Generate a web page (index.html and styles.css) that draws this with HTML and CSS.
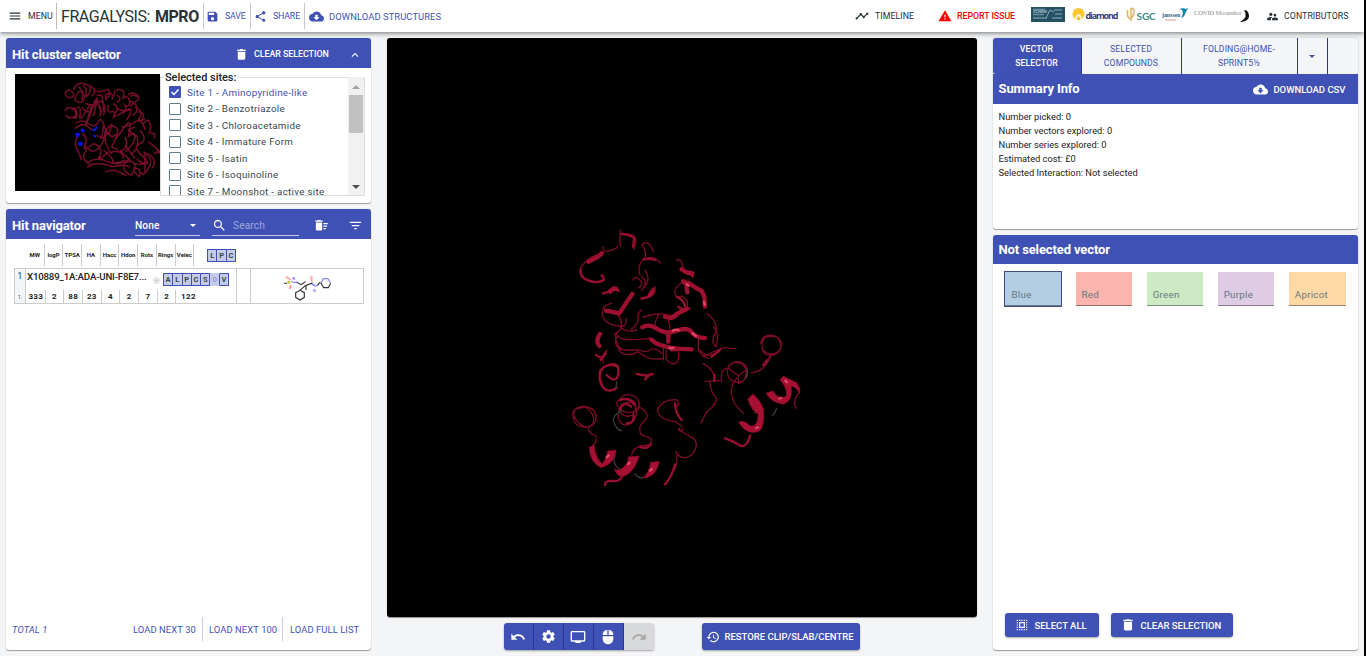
FILE: index.html
```html
<!DOCTYPE html>
<html lang="en">
<head>
<meta charset="utf-8">
<title>Fragalysis</title>
<link rel="stylesheet" href="styles.css">
</head>
<body>
<svg width="0" height="0" class="defs">
  <symbol id="trash" viewBox="0 0 24 24"><path d="M5 7h14v12c0 1.500-1 2.500-2.500 2.500h-9C6 21.500 5 20.500 5 19zM4 3h4.500l1-1h5l1 1H20v2.500H4z"/></symbol>
  <symbol id="cloud" viewBox="0 0 24 24"><path d="M19.350 10.040A7.490 7.490 0 0 0 12 4C9.110 4 6.600 5.640 5.350 8.040A5.994 5.994 0 0 0 0 14c0 3.310 2.690 6 6 6h13c2.760 0 5-2.240 5-5 0-2.640-2.050-4.780-4.650-4.960zM17 13l-5 5-5-5h3V9h4v4h3z"/></symbol>
</svg>
<header class="topbar">
  <div class="item menu"><svg viewBox="0 0 24 24" width="14" height="14"><path d="M3 18h18v-2H3v2zm0-5h18v-2H3v2zm0-7v2h18V6H3z"/></svg><span>MENU</span></div>
  <div class="item brand"><span>FRAGALYSIS:</span><b>MPRO</b></div>
  <div class="item save"><svg viewBox="0 0 24 24" width="13" height="13"><path d="M17 3H5a2 2 0 0 0-2 2v14a2 2 0 0 0 2 2h14c1.100 0 2-.9 2-2V7l-4-4zm-5 16a3 3 0 1 1 0-6 3 3 0 0 1 0 6zm3-10H5V5h10v4z"/></svg><span>SAVE</span></div>
  <div class="item share"><svg viewBox="0 0 24 24" width="13" height="13"><path d="M18 16.080c-.76 0-1.440.3-1.960.77L8.910 12.700a3.300 3.300 0 0 0 0-1.400l7.050-4.110A3 3 0 1 0 15 5c0 .24.040.47.090.7L8.040 9.810a3 3 0 1 0 0 4.380l7.120 4.160c-.05.21-.08.43-.08.650a2.920 2.920 0 1 0 2.920-2.920z"/></svg><span>SHARE</span></div>
  <div class="item dl"><svg width="15" height="15"><use href="#cloud"/></svg><span>DOWNLOAD STRUCTURES</span></div>
  <div class="item timeline"><svg viewBox="0 0 24 24" width="14" height="14"><path d="M23 8a2 2 0 0 1-2.510 1.930l-3.560 3.550A2 2 0 1 1 13.070 13.480l-2.550-2.550c-.32.090-.72.090-1.040 0l-4.550 4.560A2 2 0 1 1 3.510 14.070l4.560-4.550a2 2 0 1 1 3.860 0l2.550 2.550c.32-.09.720-.09 1.040 0l3.550-3.560A2 2 0 1 1 23 8z"/></svg><span>TIMELINE</span></div>
  <div class="item issue"><svg viewBox="0 0 24 24" width="14" height="14"><path d="M1 21h22L12 2 1 21zm12-3h-2v-2h2v2zm0-4h-2v-4h2v4z"/></svg><span>REPORT ISSUE</span></div>
  <div class="logos">
    <svg width="222" height="18" viewBox="0 0 222 18">
      <rect x="1" y="1" width="34" height="15" fill="#235063"/><path d="M3 3.500h12M3 8.500h11M3 12h14M24 4h8M25 8h7M22 12h10" stroke="#6b92a0" stroke-width="1.500"/><path d="M16 12l4-8 4 2" stroke="#8fb0bb" fill="none"/>
      <text x="3" y="7" class="lg-xs" fill="#d4e2e6">XCHEM</text>
      <circle cx="48.500" cy="8" r="6" fill="#fcc72c"/><path d="M45 14c0-8 7-8 7 0z" fill="#fff6d0"/><path d="M47 14c0-5 3-5 3 0z" fill="#f7bd2b"/>
      <text x="55.500" y="13" class="lg-d" fill="#343e75">diamond</text>
      <path d="M97.500 4v4q0 4 3 5M101 2v13M101 2q4 1 3 5t-3 5" stroke="#e3b466" stroke-width="1.500" fill="none"/>
      <text x="106.500" y="13.500" class="lg-s" fill="#3c8c83">SGC</text>
      <text x="132" y="11" class="lg-j" fill="#38658f">janssen</text><path d="M135 14h11" stroke="#e89396"/><path d="M149 3q8-2 7 2-1 6-5 7 3-5 1-8zM154 4l4-2-2 4z" fill="#1681ad"/>
      <text x="164" y="8.500" class="lg-c" fill="#888">COVID Moonshot</text><path d="M214 4q5 7-4 12 12-1 8-10-1-2-4-2z" fill="#111"/>
    </svg>
  </div>
  <div class="item contrib"><svg viewBox="0 0 24 24" width="13" height="13"><path d="M16.500 12a2.500 2.500 0 1 0 0-5 2.500 2.500 0 0 0 0 5zM9 11a3 3 0 1 0 0-6 3 3 0 0 0 0 6zm7.500 3c-1.830 0-5.500.92-5.500 2.750V19h11v-2.250c0-1.830-3.670-2.750-5.500-2.750zM9 13c-2.330 0-7 1.170-7 3.500V19h7v-2.250c0-.85.330-2.340 2.370-3.470A13 13 0 0 0 9 13z"/></svg><span>CONTRIBUTORS</span></div>
</header>

<main class="layout">
  <section class="left">
    <div class="card cluster">
      <div class="card-head"><h2 class="t-cluster">Hit cluster selector</h2>
        <div class="head-btn"><svg width="13" height="13"><use href="#trash"/></svg><span>CLEAR SELECTION</span></div>
        <svg class="chev" viewBox="0 0 24 24" width="14" height="14"><path d="M12 8l-6 6 1.410 1.410L12 10.830l4.590 4.580L18 14z"/></svg>
      </div>
      <div class="cluster-body">
        <svg class="thumb" width="145" height="117" viewBox="15 12 435 350">
          <g class="mini">
            <path d="M165 70q5-15 18-8t5 18q-16 8-23-10M190 60q10-25 30-20t30 15q10 15-5 22M195 82q15-30 25-10t-10 25q-20-5-15-15M205 50q20 10 10 40M220 45q15 15 5 35M238 50q8 15-10 30M250 60q20 10 30 0M260 75q25-5 15 20M280 65q15-15 18 0t-10 18M290 90q-10-15 5-20t12 18M312 80q0-25 18-22t8 30M320 75q20 10 0 22M338 85q15-12 20 5t-12 20M355 75q10-12 25-2t0 20q-20 8-25-8M362 78q15-8 20 5"/>
            <path d="M165 122q8-15 22-8t8 25q-20 10-28-5M185 120q10-15 15 5t-10 20M200 110q15 0 10 25t20-15 5 20 10-20 5 18M215 110q20 30 35 0t25 20M225 100q25 10 45-8M265 110q10 5 5 30M280 100q10 15 0 35M295 105q-5 25 10 20t5 20M310 100q20 10 5 30t25-5 10 25M340 100q15 10 0 30M360 110q15-20 20 0t-15 25M375 110q25 10 15 30t15 5M385 125q25 5 10 20M250 95h30v30M320 115q30 15 45 0"/>
            <path d="M195 160q20-15 40 0t30-5 20 20 20-15M195 175q25-25 50 5M205 195q-15 20-5 40t15 35M215 190q20 10 10 35t25-5M230 240q-20 20 0 35t0 15M225 225q20 30 40 10t20-50q15-25 30-15M250 220q30 10 20 35t25-10M280 160q0 40-10 45M300 165q-25 25-10 60t15 20M310 170q20 0 10 25t20-20 15 25M335 170q20 0 40-15t30 25M345 200q15 30-15 45M355 200q20-20 20 0t-30 45M380 195q10 40-15 55M390 180q25 30 0 40t10 40-30 20M400 160q15-20 20 0t-5 30M420 190q20-5 12 15M415 215q20 15 35 30l-20 5M440 240l10 10"/>
            <path d="M235 275q25-15 60 0t65-10M240 285q30-10 70 5M265 260q40 30 80 10M280 240q30 20 30 40M330 240l35 35M345 225l30 40M305 245q35-5 35 20M310 290q30-10 50 0M285 305q30-12 50 5l15 5M340 290q5-20 25-15t0 40q-20-5-25-25M370 300q20 30 20 10t-20-15M400 245q35 20 15 50t-20 10M405 245v60M415 250q30 20 10 45M380 265q15 20 35 10M285 180l20 20 20-10M260 195l20 10 15-20M320 200l-15 30 20 10M375 170l-20 10 25 20"/>
          </g>
          <g fill="#1111ef"><circle cx="218" cy="181" r="6"/><circle cx="203" cy="194" r="7"/><circle cx="211" cy="221" r="7"/></g>
          <path d="M246 177l8 4 8-12M250 195l8 6" fill="none" stroke="#1515d0" stroke-width="6"/>
        </svg>
        <fieldset class="sites"><legend>Selected sites:</legend>
          <div class="site-list">
            <label class="on"><i><svg viewBox="0 0 12 12" width="12" height="12"><path d="M2.500 6l2.500 2.500L9.500 3.500" fill="none" stroke="#fff" stroke-width="1.500"/></svg></i><span>Site 1 - Aminopyridine-like</span></label>
            <label><i></i><span>Site 2 - Benzotriazole</span></label>
            <label><i></i><span>Site 3 - Chloroacetamide</span></label>
            <label><i></i><span>Site 4 - Immature Form</span></label>
            <label><i></i><span>Site 5 - Isatin</span></label>
            <label><i></i><span>Site 6 - Isoquinoline</span></label>
            <label><i></i><span>Site 7 - Moonshot - active site</span></label>
          </div>
          <div class="bar"><b class="up"></b><b class="grip"></b><b class="down"></b></div>
        </fieldset>
      </div>
    </div>

    <div class="card navigator">
      <div class="card-head"><h2>Hit navigator</h2>
        <div class="select"><span>None</span><b></b></div>
        <div class="search"><svg viewBox="0 0 24 24" width="15" height="15"><path d="M15.500 14h-.79l-.28-.27A6.500 6.500 0 1 0 13.730 14.430l.27.280v.79l5 4.990L20.490 19l-4.990-5zm-6 0a4.500 4.500 0 1 1 0-9 4.500 4.500 0 0 1 0 9z"/></svg><span>Search</span></div>
        <svg class="sweep" viewBox="0 0 24 24" width="15" height="15"><path d="M15 16h4v2h-4zM15 8h7v2h-7zM15 12h6v2h-6zM3 18c0 1.100.9 2 2 2h6c1.100 0 2-.9 2-2V7H3v11zM14 4h-3l-1-1H6L5 4H2v2h12z"/></svg>
        <svg class="filter" viewBox="0 0 24 24" width="15" height="15"><path d="M10 18h4v-2h-4v2zM3 6v2h18V6H3zm3 7h12v-2H6v2z"/></svg>
      </div>
      <div class="cols"><span>MW</span><span>logP</span><span>TPSA</span><span>HA</span><span>Hacc</span><span>Hdon</span><span>Rots</span><span>Rings</span><span>Velec</span><div class="tags"><b>L</b><b>P</b><b>C</b></div></div>
      <div class="hit">
        <div class="idx"><span>1</span><small>1.</small></div>
        <div class="info">
          <div class="name"><span>X10889_1A:ADA-UNI-F8E7...</span><svg width="7" height="7" viewBox="0 0 7 7"><circle cx="3.500" cy="3.500" r="2.800" fill="none" stroke="#ccc"/><circle cx="3.500" cy="3.500" r="1.200" fill="#bbb"/></svg><div class="tags"><b>A</b><b>L</b><b>P</b><b>C</b><b>S</b><b class="dim">D</b><b>V</b></div></div>
          <div class="vals"><span>333</span><span>2</span><span>88</span><span>23</span><span>4</span><span>2</span><span>7</span><span>2</span><span>122</span></div>
        </div>
        <div class="gap"></div>
        <div class="mol"><svg width="112" height="34" viewBox="756 190 336 102" stroke-width="3.500">
          <g class="bonds">
          <path d="M892 229l14 8 13-9M919 240l-16 14M903 254l13 7v14l-13 8-13-8v-14zM919 240l18-7 8 6M955 240l7-10M962 232h4l8 14h14l7-13M921 241v12" stroke="#333"/>
          <path d="M877 227l8 4 10-2M884 215v6M939 233l8 8 8-2M966 232l7-13h14l8 14" stroke="#8589ff"/>
          <path d="M868 217l7 5M875 238v8M938 219l1 13" stroke="#ff8580"/><path d="M855 233h9" stroke="#555"/><path d="M865 232l9-5" stroke="#ddc444" stroke-width="8"/>
          </g>
          <g class="atoms"><text x="860" y="220" fill="#ff8580">O</text><text x="869" y="251" fill="#ff8580">O</text><text x="933" y="220" fill="#ff8580">O</text><text x="880" y="224" fill="#8589ff">N</text><text x="942" y="258" fill="#8589ff">N</text></g>
        </svg></div>
      </div>
      <div class="list-foot"><em>TOTAL 1</em><span class="n30">LOAD NEXT 30</span><span class="n100">LOAD NEXT 100</span><span class="full">LOAD FULL LIST</span></div>
    </div>
  </section>

  <section class="centre">
    <div class="viewer">
      <svg width="590" height="579" viewBox="0 0 590 579">
        <g transform="translate(173,182) scale(.33333)" class="strand">
          <g class="thin"><path d="M182 30q-6 30 0 50M182 40l35 5q18 8 5 42M245 75q20-20 35 20M245 75q15 15 10 40M130 80q-5 20 20 12t22-12M132 98q-48 10-70 45-10 35 40 45 50-2 20-22"/><path d="M240 165q-10-35 15-48t45 12M218 180q10-15 22 0t-5 24M245 170q22 15 0 42M255 150q20 30-5 52M350 120q20-5 18 30M380 180q-40 20-35 38t20 10q25 15 15 35M285 200q5 30-40 38M155 250q-30 5-28 32t40 35 30-20M172 282q25 35 0 55M245 270q-15 10-10 28-5 20-22 30M248 292q20-8 40-10t65 8M295 285q-10 20-10 30M325 300q10 35 0 60M180 320q20 20 50 10M172 335q-10 10 15 22 40 5 80-2M165 340q5 50 30 50t45 0M172 350q-15 20 10 40M240 390q15 10 30 0t35 10M440 280q40 30 25 60t5 40M460 320q20 20 8 60M415 350v40q10 20 30 25M430 410q60-30 70-27t28 3M310 385v35"/><path d="M603 370c0-35 60-32 60 5s-50 40-55 15-2-45 35-40 20 55-5 55M632 405q0 10-15 30"/></g>
          <g class="mid"><path d="M185 42q20 0 38 12l-4 26M62 148q-5 30 40 38 40 0 25-20M145 215q22-25 30-2M128 220l20-5M245 235q35-3 35-30M250 118q20-4 35 2M375 155h18l5 15M355 260q15 15 33 5M268 355q12 0 20 15M350 230q20 10 25 28M108 405q15 15 30-5"/></g>
          <g class="wide"><path d="M85 125q35-15 40-25M365 148q20 15 32 12M370 184l8 8 4 25M385 188q20 15 40 25l8 17 2 30M150 215q8-10 18-8M270 225l8-12M138 272l40 8 25-38 14-20M315 290q20 10 35-8l30-15M247 322q20-12 45 5t58 5 45 5 40 17M275 360q20 20 75 25M325 340v25M335 388q30-3 60 0M120 342q-15 20-2 36"/></g>
          <g class="shine"><path d="M338 332q8-5 18-2M398 340l10 8M328 384h12M432 246l2 8M380 193l6 4"/></g>
        </g>
        <g transform="translate(173,312) scale(.33333)" class="strand">
          <g class="thin"><path d="M140 0q-15 15-10 40M175 0q25 25 60 5 35 30 75 20M320 0q-10 35 20 42 20-5 15-40M420 0q25 35 65-5M430 40q40 25 30 52l-25 3M460 92h20M485 95q-5-40 18-40M450 95q0 30 20 50-5 25-30 40l-17 35M530 85q-20 20-15 50t35 55M632 15q-10 20-20 35t-38 18M608 0q30 25 52-2M715 130q-20 30-5 45"/><path d="M502 65c0-40 60-40 60 0s-50 40-58 12 15-50 40-35 15 55-10 58M505 55l30 22 20-15M535 77v18"/><path d="M235 170q40 20 20 40t-15 30q-2 15 20 20t10 25M270 285q-50 0-55 30M292 180q15-35 60-30 8 15-5 22M292 180q5 30 55 35l20 15M368 235q0 15-12 0M355 240q20 10 45 25 20 20-5 50-30 20-48-10M350 310q5 40-15 60"/><path d="M38 195c0-35 67-35 70 5 0 45-68 40-68 0s45-38 58-5-20 50-45 20-10-40 15-42M85 235q5 20 20 20 10 15-5 30M180 150c5-25 55-20 58 10s-40 35-60 15 0-35 32-25 15 55-12 48-20-35 0-40 45 15 25 50-55 10-47-15"/></g>
          <g class="mid"><path d="M122 30l15-20M175 50q-45-15-55 20-5 30 15 48 20 10 35-5M145 45q35-10 30 25t-35 5M122 60q-8 20 4 45M230 72l28 5 20-5M255 88l15-15M345 160q0 30 20 50M240 290q20 10 32-8M455 20l25-20M463 75v18M610 45l12-15M495 265q30 10 45 22 20 8 30-30M135 405q0-15 25-12t30-25M315 403q20-20 30-60M180 150q25-10 45 12M178 180q15-30 35-10M200 220q25 0 20-25"/></g>
          <g class="grey"><path d="M170 95l-2 20M185 182q-40 20-15 50 5 10 15 10M558 55q10 10 0 30M165 315q-10 25 12 42M225 372q10 12 22 12M590 170q5 10-5 20M650 175q-5 15-12 22M680 105q15 10 10 25"/></g>
          <g class="ribbon"><path d="M88 292l14-8q6 45 25 57 15-20 15-38l27-3q-5 42-45 53-36-15-36-61z"/><path d="M205 320l33-2q-20 60-55 62-15-5-22-27 5 10 20 5 25-15 24-38z"/><path d="M272 337l26-3q-10 52-52 50 20-10 26-47z"/><path d="M535 215q20-5 35 12 15 5 22-15l2-20q-20-10-31-45l16-15q20 15 32 45 5 70-25 70-30 5-51-32z"/><path d="M618 130l20-8q15 25 38 18 12-15-16-51l10-11 40 20q15 20 8 35-5-20-24-24 5 46-25 54-36-5-51-33z"/></g>
          <g class="shine"><path d="M140 322l6-6M204 342l5-4M270 362l6-5M588 234l6-2M658 146l6-2M676 92l5 5"/></g>
        </g>
      </svg>
    </div>
    <div class="controls">
      <div class="group">
        <b><svg viewBox="0 0 24 24" width="16" height="16"><path d="M12.500 8c-2.650 0-5.050.99-6.900 2.600L2 7v9h9l-3.620-3.620A7.960 7.960 0 0 1 20.080 16l2.370-.78A10.500 10.500 0 0 0 12.500 8z"/></svg></b>
        <b><svg viewBox="0 0 24 24" width="15" height="15"><path fill-rule="evenodd" d="M9.500 2h5l.5 3 1.700 1 2.800-1.100 2.500 4.300-2.300 1.900v1.800l2.300 1.900-2.500 4.300-2.800-1.100-1.700 1-.5 3h-5L9 19l-1.700-1-2.800 1.100L2 14.800l2.300-1.900v-1.800L2 9.200l2.500-4.300L7.300 6 9 5zM12 8.500a3.500 3.500 0 1 0 0 7 3.500 3.500 0 0 0 0-7z"/></svg></b>
        <b><svg viewBox="0 0 24 24" width="16" height="16"><path d="M21 3H3a2 2 0 0 0-2 2v12a2 2 0 0 0 2 2h5v2h8v-2h5a2 2 0 0 0 2-2V5a2 2 0 0 0-2-2zm0 14H3V5h18v12z"/></svg></b>
        <b><svg viewBox="0 0 24 24" width="16" height="16"><path d="M13 1.070V9h7a8 8 0 0 0-7-7.930zM4 15a8 8 0 0 0 16 0v-4H4v4zm7-13.930A8 8 0 0 0 4 9h7V1.070z"/></svg></b>
        <b class="off"><svg viewBox="0 0 24 24" width="16" height="16"><path d="M18.400 10.600A10.500 10.500 0 0 0 1.540 15.220L3.900 16a8 8 0 0 1 12.710-3.620L13 16h9V7l-3.600 3.600z"/></svg></b>
      </div>
      <div class="btn restore"><svg viewBox="0 0 24 24" width="14" height="14"><path d="M13 3a9 9 0 0 0-9 9H1l3.890 3.890L9 12H6a7 7 0 1 1 2.060 4.940l-1.420 1.420A9 9 0 1 0 13 3zm-1 5v5l4.280 2.540.72-1.210-3.500-2.080V8H12z"/></svg><span>RESTORE CLIP/SLAB/CENTRE</span></div>
    </div>
  </section>

  <section class="right">
    <div class="tabs"><div class="active">VECTOR<br>SELECTOR</div><div>SELECTED<br>COMPOUNDS</div><div>FOLDING@HOME-<br>SPRINT5½</div><div><b></b></div><div></div></div>
    <div class="card summary">
      <div class="card-head"><h2>Summary Info</h2><div class="csv"><svg width="15" height="15"><use href="#cloud"/></svg><span>DOWNLOAD CSV</span></div></div>
      <div class="stats"><p>Number picked: 0</p><p>Number vectors explored: 0</p><p>Number series explored: 0</p><p>Estimated cost: £0</p><p>Selected Interaction: Not selected</p></div>
    </div>
    <div class="card vector">
      <div class="card-head"><h2>Not selected vector</h2></div>
      <div class="chips"><div class="blue">Blue</div><div class="red">Red</div><div class="green">Green</div><div class="purple">Purple</div><div class="apricot">Apricot</div></div>
      <div class="actions">
        <div class="btn all"><svg viewBox="0 0 24 24" width="14" height="14"><path d="M3 5h2V3H3zM3 13h2v-2H3zM7 21h2v-2H7zM3 9h2V7H3zM11 5h2V3h-2zM19 3v2h2V3zM3 21h2v-2H3zM3 17h2v-2H3zM7 5h2V3H7zM11 21h2v-2h-2zM19 13h2v-2h-2zM19 21h2v-2h-2zM19 9h2V7h-2zM19 17h2v-2h-2zM15 21h2v-2h-2zM15 5h2V3h-2zM7 17h10V7H7zm2-8h6v6H9z"/></svg><span>SELECT ALL</span></div>
        <div class="btn clear"><svg width="14" height="14"><use href="#trash"/></svg><span>CLEAR SELECTION</span></div>
      </div>
    </div>
  </section>
</main>
</body>
</html>
```
FILE: styles.css
```css
* { box-sizing: border-box; }
body { margin: 0; width: 1366px; height: 656px; overflow: hidden; background: #f4f5f7; font-family: Roboto, sans-serif; color: #263238; border-right: 2px solid #000; }
.defs { position: absolute; }
svg { display: block; flex: none; fill: currentColor; }
h2, p { margin: 0; }
span { white-space: nowrap; }

.topbar { display: flex; height: 32px; background: #fff; box-shadow: 0 1px 5px rgba(0,0,0,.55); position: relative; font-size: 8.800px; font-weight: 400; letter-spacing: .05px; align-items: flex-start; }
.item { display: flex; align-items: center; height: 26px; margin-top: 3px; flex: none; }
.menu { width: 57px; padding-left: 8px; gap: 6px; border-right: 1px solid #bbb; }
.brand { width: 147px; padding-left: 4px; gap: 5px; font-size: 16px; letter-spacing: -.45px; border-right: 1px solid #c6c6cc; }
.brand b { font-weight: 700; }
.save, .share, .dl { color: #3f51b5; }
.save { width: 47px; padding-left: 2px; gap: 6px; border-right: 1px solid #c6c6cc; letter-spacing: -.15px; }
.share { width: 54px; padding-left: 3px; gap: 6px; border-right: 1px solid #c6c6cc; letter-spacing: -.15px; }
.dl { width: 550px; padding-left: 4px; gap: 5px; font-size: 9.400px; letter-spacing: .08px; }
.timeline { width: 83px; gap: 6px; }
.issue { width: 92px; gap: 5px; color: #f00; font-weight: 500; letter-spacing: -.05px; }
.logos { width: 236px; padding-top: 6px; }
.contrib { gap: 5px; letter-spacing: .05px; }
.lg-xs { font-size: 4px; letter-spacing: 0; }
.lg-d { font: 700 9px "Open Sans", sans-serif; letter-spacing: -1.150px; }
.lg-s { font: 700 10px Lato, sans-serif; letter-spacing: -.1px; }
.lg-j { font: 700 6px "Liberation Serif", serif; letter-spacing: -.1px; }
.lg-c { font: 6.500px "Liberation Serif", serif; letter-spacing: -.1px; }

.layout { display: flex; gap: 15.500px; padding: 6px 6px; height: 624px; }
.left, .right { width: 365px; flex: none; display: flex; flex-direction: column; }
.left { gap: 6px; }
.card { background: #fff; border-radius: 3px; box-shadow: 0 1px 1px rgba(0,0,0,.35), 0 0 1px rgba(0,0,0,.2); overflow: hidden; flex: none; }
.card-head { display: flex; align-items: center; height: 30px; background: #3f51b5; color: #fff; padding: 0 6px; }
.card-head h2 { font-size: 13px; font-weight: 700; letter-spacing: -.12px; line-height: 30px; white-space: nowrap; padding-top: 3px; }

.cluster { height: 165px; }
.cluster .card-head h2 { width: 223px; }
.head-btn { display: flex; align-items: center; width: 107px; gap: 6px; font-size: 8.900px; font-weight: 500; letter-spacing: -.05px; padding-top: 2px; }
.chev { margin: 3px 0 0 6px; }
.cluster-body { display: flex; padding: 6px 6px 0 9px; }
.thumb { background: #000; }
.mini path { fill: none; stroke: #8a1230; stroke-width: 4.500; opacity: .85; }
.sites { display: flex; height: 125px; width: 205px; margin: -3px 0 0; padding: 0 0 0 8px; border: 1px solid #ddd; font-size: 9.800px; }
.sites legend { font-size: 11px; line-height: 14px; padding: 0 1px; margin-left: -5px; font-weight: 500; color: #222; letter-spacing: -.05px; height: 12px; }
.site-list { width: 179px; height: 112px; overflow: hidden; flex: none; padding-top: 1px; }
.site-list label { display: flex; align-items: center; height: 16.500px; gap: 6px; letter-spacing: .3px; color: #37474f; }
.site-list i { width: 12px; height: 12px; border: 1.500px solid #607d8b; border-radius: 1px; flex: none; }
.site-list .on { color: #3f51b5; }
.site-list .on i { background: #3f51b5; border: 0; }
.bar { width: 16px; height: 118px; background: #f1f1f1; display: flex; flex-direction: column; align-items: center; margin-top: -6px; padding-top: 8px; }
.bar .up { border: 4px solid transparent; border-top: 0; border-bottom: 4px solid #a3a3a3; }
.bar .grip { width: 14px; height: 38px; background: #c1c1c1; margin: 6px 0 52px; }
.bar .down { border: 4px solid transparent; border-bottom: 0; border-top: 4px solid #505050; }

.navigator { height: 441px; display: flex; flex-direction: column; }
.navigator .card-head { flex: none; }
.navigator h2 { width: 123px; }
.select { display: flex; align-items: center; justify-content: space-between; width: 65px; height: 21px; padding: 0 4px 0 0; border-bottom: 1px solid #c5cbe9; font-size: 10.200px; margin-top: 3px; letter-spacing: .1px; font-weight: 500; }
.select b, .tabs b { border: 3.500px solid transparent; border-top: 3.500px solid; border-bottom: 0; }
.search { display: flex; align-items: center; gap: 6px; width: 87px; height: 21px; margin: 3px 0 0 12px; border-bottom: 1px solid #c5cbe9; font-size: 10.200px; letter-spacing: .1px; }
.search span { color: #9fa8da; }
.sweep { margin: 3px 0 0 15px; }
.filter { margin: 3px 0 0 19px; }
.cols { display: flex; height: 29px; padding: 5px 0 0 20px; font-size: 6px; font-weight: 700; color: #222; }
.cols > span { width: 18.700px; height: 22px; line-height: 22px; text-align: center; border-right: 1px solid #ccc; overflow: hidden; }
.tags { display: flex; height: 13px; border-left: 1px solid #3f51b5; }
.tags b { width: 9.300px; height: 13px; line-height: 12px; border: 1px solid #3f51b5; border-left: 0; background: #c5cae9; color: #37474f; font-size: 7.500px; font-weight: 700; text-align: center; }
.tags .dim { border-color: #c5cae9; color: #9aa2d0; border-right-color: #3f51b5; }
.cols .tags { margin: 5px 0 0 13px; }
.hit { display: flex; width: 350px; height: 36px; margin-left: 8px; border: 1px solid #ccc; }
.idx { width: 11px; background: #f4f5f7; border-right: 1px solid #ccc; font-size: 8.500px; text-align: center; display: flex; flex-direction: column; justify-content: space-between; padding: 2px 0 3px; }
.idx small { font-size: 5px; }
.info { width: 212px; border-right: 1px solid #ccc; display: flex; flex-direction: column; justify-content: space-between; }
.name { display: flex; align-items: center; height: 18px; font-size: 9.700px; font-weight: 500; color: #222; }
.name span { width: 127px; padding-left: 1px; margin-top: -3px; letter-spacing: -.18px; }
.name .tags { margin: 3px 0 0 3px; }
.name svg { margin-top: 5px; }
.vals { display: flex; height: 13px; font-size: 8px; font-weight: 700; color: #222; letter-spacing: .3px; padding-left: 1px; }
.vals span { width: 18.700px; line-height: 13px; text-align: center; border-right: 1px solid #ccc; }
.vals span:last-child { width: 24px; border: 0; }
.gap { width: 14px; border-right: 1px solid #ccc; }
.bonds path { fill: none; }
.atoms { font: 700 12px Roboto, sans-serif; stroke: none; }
.list-foot { display: flex; margin-top: auto; height: 33px; font-size: 9.400px; color: #3f51b5; line-height: 26px; padding-left: 6px; letter-spacing: .08px; }
.list-foot em { width: 121px; letter-spacing: .1px; }
.list-foot span { height: 24px; }
.n30 { width: 70px; border-right: 1px solid #c5cae9; }
.n100 { width: 80px; padding-left: 6px; border-right: 1px solid #c5cae9; }
.full { padding-left: 7px; }

.centre { width: 590.500px; flex: none; }
.viewer { height: 579px; background: #000; border-radius: 3px; box-shadow: 0 1px 1px rgba(0,0,0,.4); }
.strand path { fill: none; stroke-linecap: round; stroke-linejoin: round; }
.strand .thin path { stroke: #7c0c26; stroke-width: 4; }
.strand .mid path { stroke: #960f2e; stroke-width: 7; }
.strand .wide path { stroke: #9e1030; stroke-width: 13; }
.strand .grey path { stroke: #3a393b; stroke-width: 4; }
.strand .ribbon path { fill: #a51033; stroke: #790922; stroke-width: 1.500; }
.strand .shine path { stroke: #dd4563; stroke-width: 7; }
.controls { display: flex; padding: 6px 0 0 117px; gap: 48px; }
.group { display: flex; height: 27px; border-radius: 3px; overflow: hidden; box-shadow: 0 1px 2px rgba(0,0,0,.35); }
.group b { width: 30px; display: flex; align-items: center; justify-content: center; background: #3f51b5; color: #fff; border-right: 1px solid #283593; }
.group .off { background: #d8d9da; color: #a6a6a6; border: 0; }
.btn { display: flex; align-items: center; height: 24px; border-radius: 3px; background: #3f51b5; color: #fff; box-shadow: 0 1px 2px rgba(0,0,0,.35); font-size: 9.500px; font-weight: 500; }
.restore { width: 158px; height: 27px; padding-left: 4px; gap: 5px; }

.tabs { display: flex; height: 36px; font-size: 8.700px; letter-spacing: .1px; color: #3f51b5; text-align: center; line-height: 14px; border-radius: 3px; overflow: hidden; flex: none; box-shadow: 0 0 2px rgba(0,0,0,.25); }
.tabs div { width: 100px; border-right: 1px solid #283593; padding-top: 4px; }
.tabs .active { width: 89px; background: #3f51b5; color: #fff; font-weight: 500; }
.tabs div:nth-child(2) { width: 100px; }
.tabs div:nth-child(3) { width: 116px; }
.tabs div:nth-child(4) { width: 30px; display: flex; align-items: center; justify-content: center; padding-top: 1px; }
.tabs div:last-child { width: 30px; border: 0; }
.summary { height: 155px; margin-bottom: 6px; border-radius: 0 0 3px 3px; }
.summary .card-head { justify-content: space-between; padding-right: 12px; }
.summary .card-head h2 { padding: 0; }
.csv { display: flex; align-items: center; gap: 5px; font-size: 9.500px; font-weight: 500; }
.stats { padding: 6px; font-size: 9.300px; line-height: 14px; color: #222; letter-spacing: 0; }
.vector { height: 415px; display: flex; flex-direction: column; }
.vector .card-head { flex: none; height: 29px; }
.vector .card-head h2 { padding: 0; }
.chips { display: flex; gap: 14.300px; padding: 8px 12px; }
.chips div { width: 57px; height: 34px; border-bottom: 1px solid rgba(0,0,0,.4); padding: 16px 0 0 6px; font-size: 9.800px; line-height: 14px; letter-spacing: .25px; color: #687780; }
.chips .blue { background: #b3cde3; outline: 1px solid #3f4b82; padding-left: 7px; }
.chips .red { background: #fbb4ae; }
.chips .green { background: #ccebc5; }
.chips .purple { background: #decbe4; }
.chips .apricot { background: #fed9a6; }
.actions { display: flex; gap: 12px; margin: auto 0 13px 12px; }
.all { width: 94px; padding-left: 10px; gap: 6px; }
.clear { width: 122px; padding-left: 10px; gap: 6px; }
```
